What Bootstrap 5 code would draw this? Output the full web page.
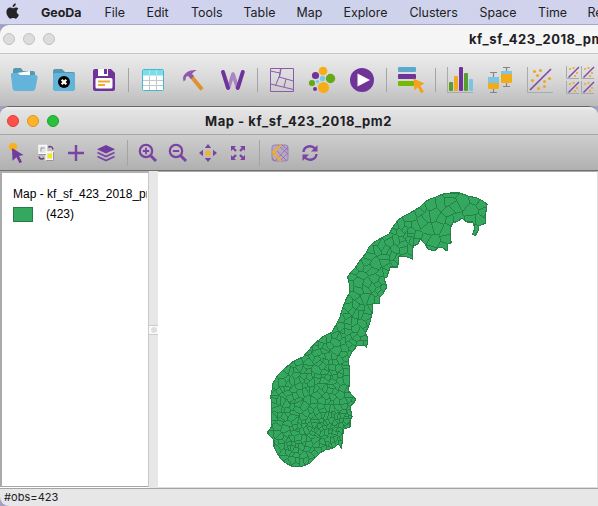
<!DOCTYPE html>
<html lang="en">
<head>
<meta charset="utf-8">
<title>GeoDa</title>
<link href="https://cdn.jsdelivr.net/npm/bootstrap@5.3.0/dist/css/bootstrap.min.css" rel="stylesheet">
<style>
body{width:598px;height:506px;overflow:hidden;background:#a2a1c4;font-family:Inter,"Liberation Sans",sans-serif;color:#202024}
svg{display:block;flex:none}
.menubar{height:25px;background:linear-gradient(90deg,#d5d6ef,#d1d3ee 30%,#cdd3ea 55%,#d2d2ec);border-bottom:1px solid #a5a7cb;font-size:12.4px;line-height:25px;white-space:nowrap}
.menubar span{flex:none;text-align:left}
.main-win{border-radius:9px 0 0 0;overflow:hidden;background:#f5f5f5}
.main-title{height:29px;border-bottom:1px solid #c5c7c6;padding-left:3px}
.dot{width:12px;height:12px;border-radius:50%;border:1px solid #c1c1c1;background:#dcdcdc;flex:none}
.ttl{font-weight:700;white-space:nowrap;font-size:13px;line-height:28px;letter-spacing:.54px;flex:none}
.main-title .ttl{margin-left:414px}
.map-title .ttl{margin-left:146px}
.main-tools{height:52px;background:linear-gradient(#ececec,#d8d8d8 50%,#bbb)}
.sep{border-left:1px solid #a4a4a4;flex:none}
.map-win{border-radius:9px 9px 0 9px;overflow:hidden;background:#e7e7e7;height:400px;border-top:1px solid #67656e}
.map-title{height:28px;background:linear-gradient(#f1f1f1,#e3e3e3 15%,#d3d3d3);border-bottom:1px solid #a6a6a6;padding-left:7px}
.map-tools{height:36px;background:linear-gradient(#cecece,#b0b0b0);border-bottom:1px solid #707070;padding-left:1px}
.panes{height:317px;background:#fff}
.legend{width:149px;border:2px solid #b1b1b1;border-left-color:#aaa;border-right:1px solid #c9c9c9;border-bottom:1px solid #a6a6a6;font:12px "Liberation Sans",Arial,sans-serif;color:#000;overflow:hidden;white-space:nowrap;height:316px;padding:14px 1px 0 11px}
.swatch{width:20px;height:15px;background:#34a85f;border:1px solid #267c47}
.sash{width:9px;background:#e7e7e7}
.grip{height:10px;border-top:1px solid #ccc;border-bottom:1px solid #ccc;background:#fafafa}
.grip i{width:6px;height:6px;border-radius:50%;background:#dedede}
.canvas{border-right:1px solid #ddd;border-bottom:1px solid #ddd;border-top:1px solid #aaa}
.status{height:18px;border-top:1px solid #a4a4a4;font-size:11px;line-height:16px;padding-left:4px;letter-spacing:.05px}
</style>
<script src="https://cdn.jsdelivr.net/npm/bootstrap@5.3.0/dist/js/bootstrap.bundle.min.js"></script>
</head>
<body class="m-0">
<nav class="menubar d-flex overflow-hidden">
<svg width="41" height="24" viewBox="0 0 41 24"><path fill="#252529" d="M12.6 7.2C12.4 5.2 14 3.5 15.8 3.2c.2 2-1.4 3.8-3.2 4ZM12.8 8.2c.8 0 1.7-.9 3-.8 1.100 0 2 .5 2.600 1.400-2.500 1.500-2 4.900.5 5.900-.5 1.500-1.800 4-3.300 4-.9 0-1.300-.6-2.500-.6s-1.600.6-2.500.6c-2 0-4.200-4.100-4.200-6.700 0-2.700 1.700-4.500 3.600-4.500 1.200 0 2.100.7 2.800.7Z"/></svg>
<span class="fw-bold" style="width:63.500px">GeoDa</span><span style="width:42px">File</span><span style="width:44.500px">Edit</span><span style="width:52.500px">Tools</span><span style="width:53px">Table</span><span style="width:47px">Map</span><span style="width:66px">Explore</span><span style="width:70px">Clusters</span><span style="width:58.500px">Space</span><span style="width:49.500px">Time</span><span>Regression</span>
</nav>
<section class="main-win">
<header class="main-title d-flex align-items-center overflow-hidden"><div class="d-flex gap-2"><i class="dot"></i><i class="dot"></i><i class="dot"></i></div><span class="ttl">kf_sf_423_2018_pm2</span></header>
<div class="main-tools d-flex align-items-center overflow-hidden">
<svg class="ms-1" width="40" height="40"><path fill="#5599b0" d="M9 10q0-2 2-2h6l2 3h10q2 0 2 2v8H9z"/><path fill="#fff" d="m13 13 13-2v8H13z"/><path fill="#63b3da" d="M8 13h5q2 0 3 2h15q3 0 2.500 3l-2 10q-.5 3-3 3h-17q-2.500 0-3-3L7 16q-.4-3 1-3z"/></svg>
<svg width="40" height="40"><path fill="#5599b0" d="M9 14v-3q0-2 2-2h7l3 3h8q2 0 2 2v2H9z"/><rect x="9" y="13" width="22" height="18" rx="2" fill="#63b3da"/><circle cx="20" cy="22" r="6"/><path d="m17.700 19.700 4.600 4.600m0-4.600-4.600 4.600" stroke="#fff" stroke-width="2.300"/></svg>
<svg width="40" height="40"><path fill="#703498" d="M11 9h16l4 4v16q0 2-2 2H11q-2 0-2-2V11q0-2 2-2z"/><path fill="#fff" d="M14 9h10v7H14zM13 18h14q1.500 0 1.500 1.500V27q0 1.500-1.500 1.500H13q-1.500 0-1.500-1.500v-7.500Q11.500 18 13 18z"/><path fill="#703498" d="M20 9h3v5h-3z"/><path stroke="#eeaa34" stroke-width="2" d="M14 21.500h12M14 25h7"/></svg>
<i class="sep ms-1 me-1" style="height:24px"></i>
<svg width="40" height="40"><rect x="9.500" y="9.500" width="21" height="21" rx="1" fill="#fff" stroke="#43b8ce"/><path fill="#7edcea" d="M10 10h20v5.500H10z"/><path d="M10 20.500h20M10 25.500h20M16.500 16v14M23.500 16v14" stroke="#c2c8ca"/><path d="M16.500 10v6M23.500 10v6" stroke="#a0edf3"/></svg>
<svg width="40" height="40"><path d="m18 16 11 13.500" stroke="#df912f" stroke-width="4"/><path fill="#8d5aae" d="M10 18c1-5 6-8.500 14-8-2 1-4 2-5 4l2 2-3 3-3-3-2 1-.5 3-2 1.500z"/></svg>
<svg width="40" height="40"><path fill="none" stroke="#a985c1" stroke-width="3.600" stroke-linejoin="round" d="m15.500 28 4.500-14 4.500 14"/><path fill="none" stroke="#703498" stroke-width="4" stroke-linecap="round" d="m10 12 5 16M24.800 28l5-16"/></svg>
<i class="sep ms-1 me-1" style="height:24px"></i>
<svg width="40" height="40"><path fill="none" stroke="#8b5aab" d="M8.500 8.500h23v23h-23zM8.500 11l9.500 2 .5-4.500M18 13l-1 5M17 17l14.500 4M17 17l-3.500 8.500M8.500 24l23 5.500M24 19l-2 8M19 9l-1.500 8"/></svg>
<svg width="40" height="40"><circle cx="21" cy="11" r="4.300" fill="#f5ae15"/><circle cx="13.500" cy="15.500" r="3.600" fill="#703498"/><circle cx="28.500" cy="18.500" r="4.700" fill="#65aa16"/><circle cx="20.500" cy="18.500" r="2.700" fill="#79c8e5"/><circle cx="15.500" cy="21.500" r="1.600" fill="#79c8e5"/><circle cx="10" cy="23" r="3.100" fill="#65aa16"/><circle cx="13" cy="29" r="2" fill="#703498"/><circle cx="21.500" cy="27.500" r="5.500" fill="#f5ae15"/></svg>
<svg width="40" height="40"><circle cx="20" cy="20" r="12" fill="#703498"/><path fill="#fff" d="m15.500 13.500 12.500 6.500-12.500 6.500z"/></svg>
<i class="sep ms-1 me-1" style="height:24px"></i>
<svg width="40" height="40"><rect x="7" y="7" width="18" height="5" rx="1" fill="#5ca9d0"/><rect x="7" y="14" width="18" height="5" rx="1" fill="#703498"/><rect x="7" y="21" width="16" height="5" rx="1" fill="#76b900"/><path fill="#f5a11b" d="m22.500 18.500 11 5-4.200 2.200 3.700 6-3 1.500-3.200-6-3.300 3.300z"/></svg>
<i class="sep ms-1 me-1" style="height:24px"></i>
<svg width="40" height="40"><path fill="none" stroke="#aaa" d="M7.500 7v25.500H33"/><rect x="9" y="22" width="4" height="9" rx="1" fill="#569f2c"/><rect x="14" y="16" width="4" height="15" rx="1" fill="#edaa25"/><rect x="19" y="7" width="4" height="24" rx="1" fill="#703498"/><rect x="24" y="13" width="4" height="18" rx="1" fill="#569f2c"/><rect x="29" y="19" width="4" height="12" rx="1" fill="#77c6e5"/></svg>
<svg width="40" height="40"><path stroke="#858585" stroke-width="1.200" fill="none" d="M10 12.500h7M13.500 12v20M10 32.500h7M23 7.500h7M26.500 7v20M23 26.500h7"/><rect x="8" y="17" width="11" height="12" rx="1" fill="#f1ac18"/><path fill="#7ac6e3" d="M8 17h11v6H8z"/><rect x="21" y="11" width="11" height="12" rx="1" fill="#f1ac18"/><path fill="#7ac6e3" d="M21 11h11v3H21z"/></svg>
<svg width="40" height="40"><path fill="none" stroke="#aaa" d="M7.500 7v25.500H33"/><path stroke="#7e4ca4" stroke-width="1.700" d="M10 30 31 9"/><g fill="#eca82b"><circle cx="14.500" cy="11.500" r="1.600"/><circle cx="20.500" cy="10.500" r="1.600"/><circle cx="17.500" cy="15.500" r="1.600"/><circle cx="12.500" cy="20.500" r="1.600"/><circle cx="29.500" cy="18.500" r="1.600"/><circle cx="24.500" cy="21.500" r="1.600"/><circle cx="24.500" cy="26.500" r="1.600"/><circle cx="18.500" cy="28.500" r="1.600"/></g></svg>
<svg width="40" height="40"><defs><g id="scat"><path fill="none" stroke="#aaa" d="M.5 0v12.500H13"/><path stroke="#7e4ca4" stroke-width="1.500" d="M2.500 11.500 13 1"/><g fill="#eca82b"><circle cx="4" cy="3" r="1.100"/><circle cx="7.500" cy="2" r="1.100"/><circle cx="11" cy="7" r="1.100"/><circle cx="9" cy="10" r="1.100"/></g></g></defs><use href="#scat" x="6" y="6"/><use href="#scat" x="21" y="6"/><use href="#scat" x="6" y="21"/><use href="#scat" x="21" y="21"/></svg>
</div>
</section>
<section class="map-win">
<header class="map-title d-flex align-items-center"><div class="d-flex gap-2"><i class="dot" style="background:#ff5049;border-color:#db3f39"></i><i class="dot" style="background:#fdb42b;border-color:#dc9521"></i><i class="dot" style="background:#28c13d;border-color:#1ba32b"></i></div><span class="ttl">Map - kf_sf_423_2018_pm2</span></header>
<div class="map-tools d-flex align-items-center">
<svg width="30" height="30"><circle cx="12" cy="9" r="4.200" fill="#f5b21c"/><path fill="#703c9d" d="m11 10 11.500 7-4.500 1 3 6-2.500 1.200-3-6-4 3.500z"/></svg>
<svg width="30" height="30"><path fill="#e4e4e4" stroke="#fafafa" stroke-width="1.400" d="M8 7.500h7.500v8H8zM15 14h7v8h-7z"/><path fill="none" stroke="#999" d="M7.500 16.500h7.500M15 22.500h7.500V14M10 13.500V10h3.500"/><path fill="#f6e90a" d="M16.500 20.500v-4l4.500-1.500v5.500l-2-1z"/><path fill="none" stroke="#653d77" stroke-width="1.500" d="M17.500 9.500c1-1.500 4-1.500 4.500 2M8 18.500c.5 3 3.500 3 5 1.500"/></svg>
<svg width="30" height="30"><path stroke="#7b43a3" stroke-width="2.400" d="M15 7v16M7 15h16"/></svg>
<svg width="30" height="30"><path fill="#703c9d" d="m15 7 9 4.300-9 4.300-9-4.300z"/><path fill="none" stroke="#7b43a3" stroke-width="1.700" d="m6.500 14.500 8.500 4 8.500-4m-17 4 8.500 4 8.500-4"/></svg>
<i class="sep" style="height:26px;margin:0 5px 0 6px"></i>
<svg width="30" height="30"><g id="lens" fill="none" stroke="#7b43a3"><circle cx="13" cy="13" r="6.200" stroke-width="2.200"/><path stroke-width="3" d="m17.700 17.700 5.300 5.300"/><path stroke-width="1.800" d="M9.800 13h6.400"/></g><path stroke="#7b43a3" stroke-width="1.800" d="M13 9.800v6.400"/></svg>
<svg width="30" height="30"><use href="#lens"/></svg>
<svg width="30" height="30"><circle cx="15" cy="15" r="2.600" fill="#f6b31c"/><path fill="#7b43a3" d="m15 6 3.200 4h-6.400zM15 24l3.200-4h-6.400zM6 15l4-3.200v6.400zM24 15l-4-3.200v6.400z"/></svg>
<svg width="30" height="30"><path fill="#7b43a3" d="M8 8h5l-5 5zM22 8v5l-5-5zM22 22h-5l5-5zM8 22v-5l5 5z"/><path stroke="#7b43a3" stroke-width="2.300" d="m9 9 4 4M21 9l-4 4M21 21l-4-4M9 21l4-4"/></svg>
<i class="sep" style="height:26px;margin:0 5px 0 6px"></i>
<svg width="30" height="30"><rect x="7" y="7" width="16" height="16" rx="2.500" fill="#b5a9c4" stroke="#9b7eb8"/><path fill="none" stroke="#8e69b0" stroke-width=".8" d="m13 7 10 9M17 7l6 5M10 23l13-14M15 23l8-8M12 13l10 10M8 15l4-4M7 20l3 3"/><path fill="none" stroke="#f1ad24" stroke-width="2" d="m16 7-8 7 8 9M8 18l3-2"/></svg>
<svg width="30" height="30"><path fill="none" stroke="#7b43a3" stroke-width="2.400" d="M8.500 14c.5-6 8-7.500 11.500-3.500M21.500 16c-.5 6-8 7.500-11.500 3.500"/><path fill="#7b43a3" d="M22.500 7v6.500H16zM7.500 23v-6.500H14z"/></svg>
</div>
<main class="panes d-flex">
<aside class="legend flex-shrink-0"><div class="overflow-hidden">Map - kf_sf_423_2018_pm2</div><div class="d-flex align-items-center" style="margin-top:3px;height:20px"><i class="swatch"></i><span style="margin-left:13px">(423)</span></div></aside>
<div class="sash d-flex flex-column justify-content-center flex-shrink-0"><div class="grip d-flex align-items-center justify-content-center"><i></i></div></div>
<div class="canvas flex-grow-1"><svg id="map" width="439" height="315" viewBox="158 172 439 315" shape-rendering="crispEdges"></svg></div>
</main>
<footer class="status">#obs=423</footer>
</section>
<script>
// Country outline, clockwise from the middle of the west coast
const outline = "340,317 342,310 345.7,300 350,292 349,283 347.7,277 351,272 355,268 359,262 366,253 369,247 373,243 381,238 389,234 393,227 398,220 404,216 410,213 420,207 425,202 430,199 436,197 442,194.300 450,193 460,193 468,196 477,198 483,201 487,204.300 486.500,210 485,215 485.500,223 479,226 478,231 475,236 472.700,234 475,228 472.700,222 467,222 462,218 458,221 453,223 450.700,227 451,243 448,244 447,251 443,248 438,247 435,251 428,249 425,244 420,239 418,244 413,246 412.700,259 407,257 399,256 397.700,267 390,267 387,277 384,278 386.700,287 383,294 379,298 380,303 372.700,304 372,314 370,322 368,328 365,333 368,338 366.700,347 363,345 357,346 352,352 348,360 350,370 349,376 350,383 348,390 352,395 355.700,399 354,403 350,406 352,416.700 350,421 350,427 344,429 342.700,435 341.700,448 338,444 335,447 330,449 325,450 320,453 315,458 310,463 303,466 297,467 291,466 286,463 281,459 277,453 274,447 274,440 268,434 268,431 271.700,427 271.700,403 270.700,397 272,390 273,383 278,375 285,368 294,361 303,357 309,350 315,343 324,336 332,332 336,325";
const poly = outline.split(" ").map(p => p.split(",").map(Number));
const inside = (x, y) => {
  let r = false;
  for (let i = 0, j = poly.length - 1; i < poly.length; j = i++) {
    const [a, b] = poly[i], [c, d] = poly[j];
    if ((b > y) !== (d > y) && x < (c - a) * (y - b) / (d - b) + a) r = !r;
  }
  return r;
};
let seed = 423;
const rnd = () => (seed = (seed * 16807) % 2147483647) / 2147483647;
// Municipalities are large in the north and small around the south-east
const gap = (x, y) => {
  if (y < 262) return x > 412 ? 10.5 : x > 385 ? 6 : 8.5;
  if (y < 305) return 7;
  if (y < 350) return 5.5;
  if (Math.hypot(x - 332, y - 430) < 20) return 2.6;
  if (Math.hypot(x - 296, y - 452) < 12) return 3.2;
  return 4.7;
};
const pts = [];
for (let t = 0; t < 60000 && pts.length < 423; t++) {
  const x = 266 + rnd() * 224, y = 191 + rnd() * 278;
  if (!inside(x, y)) continue;
  const g = gap(x, y) * (.5 + rnd() * .9);
  if (pts.every(p => Math.hypot(p[0] - x, p[1] - y) > g)) pts.push([x, y]);
}
// Each municipality is the Voronoi cell of its seed; corners shift by a fixed position-based wobble
const wob = (x, y) => [x + 1.1 * Math.sin(x * 3.1 + y * 1.7), y + 1.1 * Math.cos(x * 1.3 - y * 2.9)];
let d = "";
pts.forEach((p, i) => {
  let c = [[p[0]-30,p[1]-30],[p[0]+30,p[1]-30],[p[0]+30,p[1]+30],[p[0]-30,p[1]+30]];
  pts.forEach((q, k) => {
    if (k === i || Math.hypot(p[0]-q[0], p[1]-q[1]) > 60) return;
    const nx = q[0]-p[0], ny = q[1]-p[1], m = (q[0]*q[0]+q[1]*q[1]-p[0]*p[0]-p[1]*p[1]) / 2, o = [];
    c.forEach((a, n) => {
      const b = c[(n+1) % c.length], fa = a[0]*nx+a[1]*ny-m, fb = b[0]*nx+b[1]*ny-m;
      if (fa <= 0) o.push(a);
      if (fa * fb < 0) { const t = fa / (fa - fb); o.push([a[0]+(b[0]-a[0])*t, a[1]+(b[1]-a[1])*t]); }
    });
    c = o;
  });
  if (c.length) d += "M" + c.map(v => wob(...v).map(n => n.toFixed(1)).join(" ")).join("L") + "Z";
});
const pl = `<polygon points="${outline}"`;
document.getElementById("map").innerHTML = `<clipPath id="land">${pl}/></clipPath>${pl} fill="#34a85f"/><path clip-path="url(#land)" d="${d}" fill="none" stroke="#278048" stroke-width=".9"/>${pl} fill="none" stroke="#278048" stroke-width="1.100"/>`;
</script>
</body>
</html>
